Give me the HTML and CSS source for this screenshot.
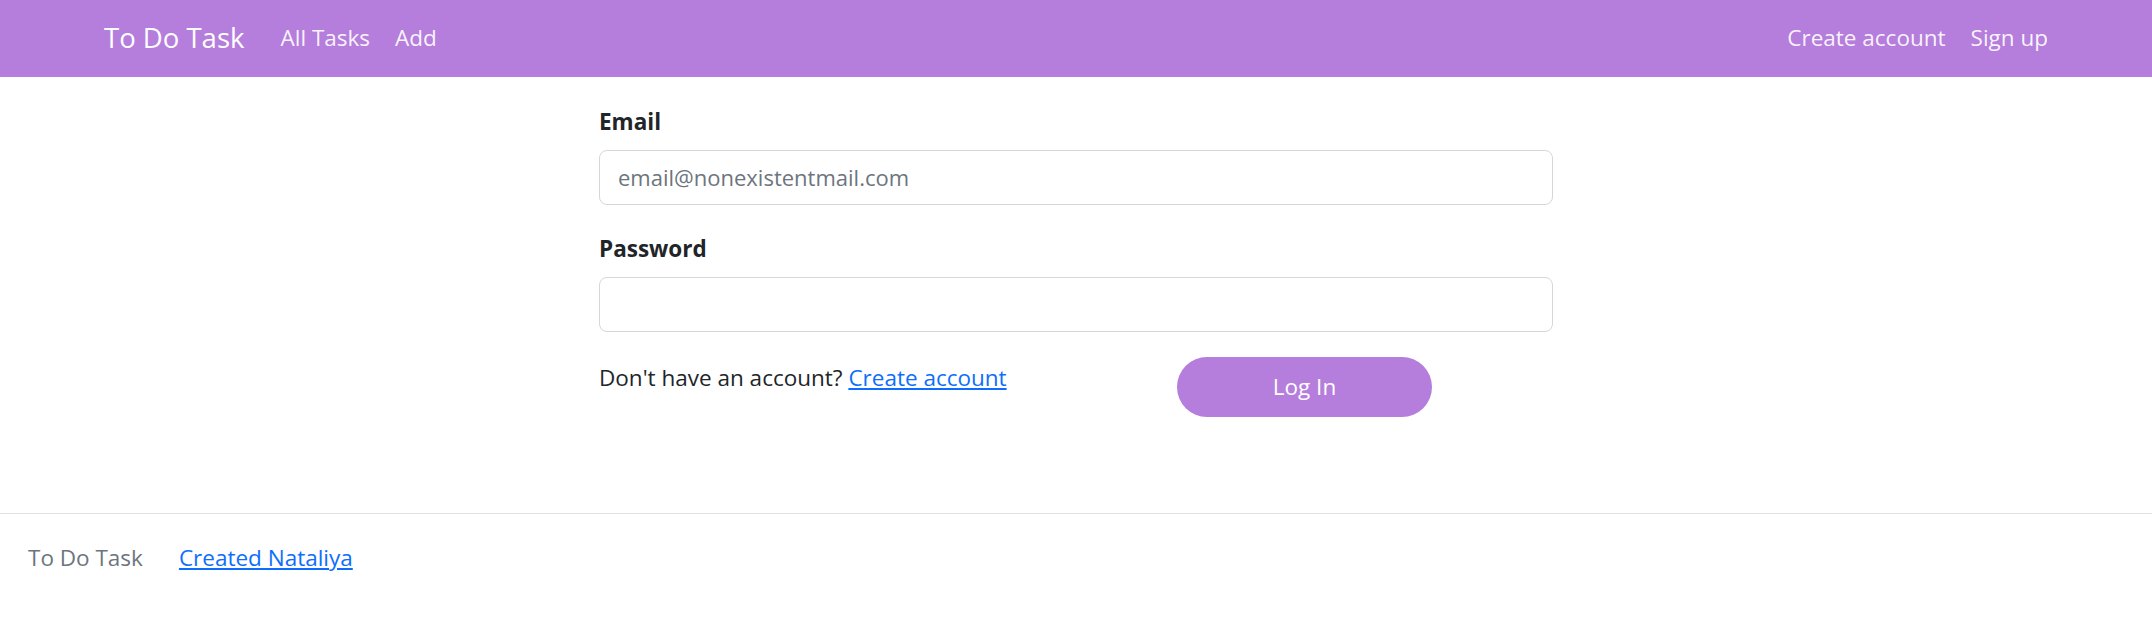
FILE: index.html
```html
<!DOCTYPE html>
<html lang="en">
<head>
<meta charset="utf-8">
<title>To Do Task</title>
<link rel="stylesheet" href="styles.css">
</head>
<body>
<nav class="navbar">
  <div class="nav-left">
    <a class="brand" href="#">To Do Task</a>
    <a class="nav-link" href="#">All Tasks</a>
    <a class="nav-link" href="#">Add</a>
  </div>
  <div class="nav-right">
    <a class="nav-link" href="#">Create account</a>
    <a class="nav-link" href="#">Sign up</a>
  </div>
</nav>
<main class="main">
  <form class="login-form">
    <div class="field">
      <label class="label" for="email">Email</label>
      <input class="input" id="email" type="email" placeholder="email@nonexistentmail.com">
    </div>
    <div class="field">
      <label class="label" for="password">Password</label>
      <input class="input" id="password" type="password">
    </div>
    <div class="actions">
      <p class="hint">Don't have an account? <a class="link" href="#">Create account</a></p>
      <button class="btn" type="button">Log In</button>
    </div>
  </form>
</main>
<footer class="footer">
  <span class="footer-brand">To Do Task</span>
  <a class="link" href="#">Created Nataliya</a>
</footer>
</body>
</html>
```

FILE: styles.css
```css
* { box-sizing: border-box; }
html, body { margin: 0; padding: 0; }
body {
  font-family: "Open Sans", "Noto Sans", sans-serif;
  font-size: 22.5px;
  line-height: 1.5;
  color: #212529;
  background: #fff;
  width: 2152px;
  height: 634px;
  overflow: hidden;
}
a { text-decoration: none; }

.navbar {
  height: 77px;
  background: #b57edc;
  display: flex;
  align-items: center;
  justify-content: space-between;
  padding: 0 104px 0 104px;
}
.nav-left, .nav-right {
  display: flex;
  align-items: center;
}
.brand {
  color: #fff;
  font-size: 27.5px;
  margin-right: 36px;
  padding-bottom: 2px;
}
.nav-link {
  color: rgba(255, 255, 255, 0.92);
  font-size: 22.5px;
  margin-right: 25px;
  padding-bottom: 2px;
}
.nav-link:last-child { margin-right: 0; }

.main {
  display: flex;
  justify-content: center;
  padding-top: 28px;
  height: 436px;
}
.login-form {
  width: 954px;
}
.field {
  margin-bottom: 27px;
}
.label {
  display: block;
  font-weight: 700;
  margin-bottom: 11px;
}
.input {
  display: block;
  width: 100%;
  height: 55px;
  border: 1px solid #d4d7dc;
  border-radius: 8px;
  padding: 0 18px;
  font-family: inherit;
  font-size: 22px;
  color: #212529;
  background: #fff;
}
.input::placeholder { color: #6c757d; }

.actions {
  display: grid;
  grid-template-columns: 578px 255px;
  align-items: start;
  margin-top: -2px;
}
.hint {
  margin: 0;
  padding-top: 4px;
}
.link {
  color: #0d6efd;
  text-decoration: underline;
}
.btn {
  height: 60px;
  width: 255px;
  border: none;
  border-radius: 30px;
  background: #b57edc;
  color: #fff;
  font-family: inherit;
  font-size: 22.5px;
}

.footer {
  border-top: 1px solid #dee2e6;
  display: flex;
  align-items: center;
  padding: 27px 28px;
}
.footer-brand {
  color: #6c757d;
  margin-right: 36px;
}
```
